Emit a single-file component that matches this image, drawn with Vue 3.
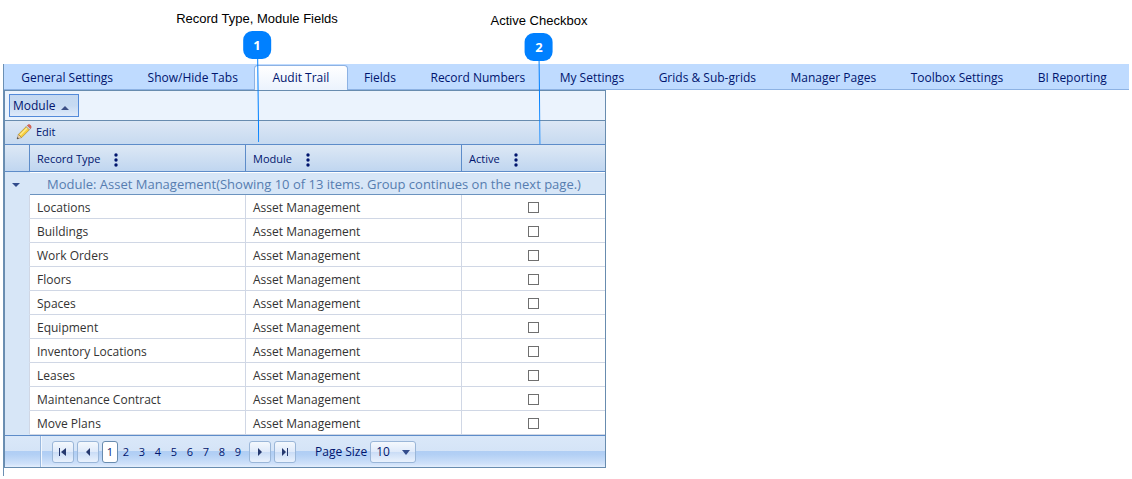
<script setup>
import { ref } from 'vue'

const tabs = [
  'General Settings', 'Show/Hide Tabs', 'Audit Trail', 'Fields', 'Record Numbers',
  'My Settings', 'Grids & Sub-grids', 'Manager Pages', 'Toolbox Settings', 'BI Reporting',
]
const activeTab = ref('Audit Trail')

const columns = ['Record Type', 'Module', 'Active']
const rows = ref([
  'Locations', 'Buildings', 'Work Orders', 'Floors', 'Spaces', 'Equipment',
  'Inventory Locations', 'Leases', 'Maintenance Contract', 'Move Plans',
].map((type) => ({ type, module: 'Asset Management', active: false })))

const page = ref(1)
const pageSize = ref('10')
</script>

<template>
  <div class="page">
    <main class="panel">
      <nav class="tabs" aria-label="Settings">
        <a
          v-for="tab in tabs"
          :key="tab"
          href="#"
          class="tab"
          :class="{ selected: tab === activeTab }"
          @click.prevent="activeTab = tab"
        >{{ tab }}</a>
      </nav>

      <section class="grid">
        <div class="group-panel">
          <button type="button" class="group-chip">
            Module
            <svg width="8" height="5" viewBox="0 0 8 5"><path d="M0 5 4 1l4 4z" fill="#3c4f86" /></svg>
          </button>
        </div>

        <div class="toolbar">
          <button type="button" class="edit">
            <svg width="16" height="16" viewBox="0 0 16 16">
              <path d="M1 15 2.4 10.4 5.6 13.6z" fill="#efd3ac" stroke="#96876f" stroke-width=".6" />
              <path d="M2.4 10.4 10.2 2.6l3.2 3.2-7.8 7.8z" fill="#f6cf3f" stroke="#b08a2c" stroke-width=".7" />
              <path d="M3.6 10.6 10.6 3.6l1 1-7 7z" fill="#fdea91" />
              <path d="m10.2 2.6 1.2-1.2 3.2 3.2-1.2 1.2z" fill="#cfd2d6" stroke="#8f9298" stroke-width=".5" />
              <path d="M11.4 1.4c.8-1 2-1.2 2.9-.3s1.2 2.500.3 3.500z" fill="#e2685c" stroke="#b8503f" stroke-width=".5" />
              <path d="M1 15l.6-1.900 1.300 1.300z" fill="#3c3c3c" />
            </svg>
            Edit
          </button>
        </div>

        <table>
          <colgroup>
            <col class="c-expand"><col class="c-wide"><col class="c-wide"><col>
          </colgroup>
          <thead>
            <tr>
              <th></th>
              <th v-for="c in columns" :key="c" scope="col">
                <span class="head">
                  {{ c }}
                  <button type="button" class="dots" :aria-label="c + ' column menu'">
                    <svg width="4" height="14" viewBox="0 0 4 14" fill="#00156e">
                      <circle cx="2" cy="2" r="1.700" /><circle cx="2" cy="7" r="1.700" /><circle cx="2" cy="12" r="1.700" />
                    </svg>
                  </button>
                </span>
              </th>
            </tr>
          </thead>
          <tbody>
            <tr class="group-row">
              <td class="side">
                <button type="button" class="toggle" aria-label="Collapse group">
                  <svg width="8" height="4" viewBox="0 0 8 4"><path d="M0 0h8L4 4z" fill="#324c8c" /></svg>
                </button>
              </td>
              <td colspan="3" class="group-title">Module: Asset Management(Showing 10 of 13 items. Group continues on the next page.)</td>
            </tr>
            <tr v-for="row in rows" :key="row.type" class="item">
              <td class="side"></td>
              <td>{{ row.type }}</td>
              <td>{{ row.module }}</td>
              <td class="check"><input v-model="row.active" type="checkbox" :aria-label="row.type + ' active'"></td>
            </tr>
          </tbody>
        </table>

        <footer class="pager">
          <div class="pager-side"></div>
          <div class="pager-body">
            <button type="button" class="nav" aria-label="First page">
              <svg width="8" height="8" viewBox="0 0 8 8"><path d="M0 0h1v8H0zM7 0v8L2 4z" fill="#26396f" /></svg>
            </button>
            <button type="button" class="nav" aria-label="Previous page">
              <svg width="8" height="8" viewBox="0 0 8 8"><path d="M6 0v8L2 4z" fill="#26396f" /></svg>
            </button>
            <div class="numbers">
              <button
                v-for="n in 9"
                :key="n"
                type="button"
                class="number"
                :class="{ current: n === page }"
                @click="page = n"
              >{{ n }}</button>
            </div>
            <button type="button" class="nav" aria-label="Next page">
              <svg width="8" height="8" viewBox="0 0 8 8"><path d="M2 0v8l4-4z" fill="#26396f" /></svg>
            </button>
            <button type="button" class="nav" aria-label="Last page">
              <svg width="8" height="8" viewBox="0 0 8 8"><path d="M6 0h1v8H6zM1 0v8l4-4z" fill="#26396f" /></svg>
            </button>
            <label for="page-size">Page Size</label>
            <span class="size">
              <select id="page-size" v-model="pageSize">
                <option>10</option>
                <option>20</option>
                <option>50</option>
              </select>
              <svg width="8" height="5" viewBox="0 0 8 5"><path d="M0 0h8L4 5z" fill="#324c8c" /></svg>
            </span>
          </div>
        </footer>
      </section>
    </main>

    <div class="callout first">
      <span class="note">Record Type, Module Fields</span>
      <span class="badge">1</span>
      <svg width="4" height="83" viewBox="0 0 4 83"><path d="M2.500 0 3.500 83" stroke="#0080ff" /></svg>
    </div>
    <div class="callout second">
      <span class="note">Active Checkbox</span>
      <span class="badge">2</span>
      <svg width="4" height="83" viewBox="0 0 4 83"><path d="M2.500 0 3.500 83" stroke="#0080ff" /></svg>
    </div>
  </div>
</template>

<style>
body {
  margin: 0;
  background: #fff;
}
</style>

<style scoped>
.page {
  position: relative;
  padding: 64px 3px 3px;
  font: 12px/16px "Open Sans", "Noto Sans", sans-serif;
  color: #333;
}

button,
select {
  margin: 0;
  padding: 0;
  border: 0;
  background: none;
  font: inherit;
  color: #00156e;
}

svg {
  display: block;
  flex: none;
}

.panel {
  border-left: 1px solid #6b8fb3;
  padding-bottom: 8px;
}

.tabs {
  display: flex;
  height: 25px;
  padding-right: 5px;
  background: #bfdbff;
  border-bottom: 1px solid #8db2e3;
}

.tab {
  flex: 1 1 auto;
  box-sizing: border-box;
  height: 25px;
  padding-top: 6px;
  text-align: center;
  text-decoration: none;
  white-space: nowrap;
  color: #00156e;
}

.tab.selected {
  margin: 1px -1px 0;
  padding-top: 4px;
  border: 1px solid #8db2e3;
  border-bottom: 0;
  border-radius: 4px 4px 0 0;
  background: linear-gradient(#fff, #ebf3fd);
}

.grid {
  box-sizing: border-box;
  width: 100%;
  max-width: 602px;
  border: 1px solid #688caf;
}

.group-panel {
  padding: 3px 4px;
  background: #ebf3fd;
  border-bottom: 1px solid #688caf;
}

.group-chip {
  display: flex;
  align-items: center;
  gap: 6px;
  box-sizing: border-box;
  width: 70px;
  height: 23px;
  padding: 0 3px;
  border: 1px solid #538ad9;
  background: linear-gradient(#c4d8f0, #c6daf2 50%, #dfeafa);
}

.group-chip svg {
  margin-top: 4px;
}

.toolbar {
  height: 23px;
  padding-left: 11px;
  background: linear-gradient(#dce7f5, #c7daf0);
  border-bottom: 1px solid #5d8cc9;
}

.edit {
  display: flex;
  align-items: center;
  gap: 4px;
  height: 22px;
  font-size: 11px;
}

table {
  width: 100%;
  table-layout: fixed;
  border-collapse: separate;
  border-spacing: 0;
}

.c-expand {
  width: 25px;
}

.c-wide {
  width: 216px;
}

th {
  box-sizing: border-box;
  height: 27px;
  padding: 2px 0 0 7px;
  background: linear-gradient(#dde8f5, #c0d6f0);
  border-right: 1px solid #5d8cc9;
  border-bottom: 1px solid #5d8cc9;
  font-size: 11px;
  font-weight: normal;
  text-align: left;
  color: #00156e;
}

th:last-child,
td:last-child {
  border-right: 0;
}

.head {
  display: flex;
  align-items: center;
  gap: 14px;
}

.dots {
  padding-top: 2px;
}

td {
  box-sizing: border-box;
  padding: 0 0 0 7px;
}

.side {
  padding: 0;
  background: #d7e6f7;
}

.group-row td {
  height: 23px;
  background: #d7e6f7;
}

.group-row .side {
  padding: 2px 0 0;
}

.toggle {
  display: block;
  padding: 4px 7px;
}

.group-row .group-title {
  padding-left: 17px;
  border-top: 1px solid #fff;
  border-bottom: 1px solid #6b93bf;
  font-size: 13px;
  color: #567db0;
}

.item td {
  height: 24px;
  padding-top: 2px;
  border-right: 1px solid #d0d7e5;
  border-bottom: 1px solid #d0d7e5;
}

.item .side {
  border-bottom-color: #d7e6f7;
}

.item td:last-child {
  border-right: 0;
}

.item .check {
  padding: 2px 0 0;
}

.check input {
  display: block;
  appearance: none;
  box-sizing: border-box;
  width: 11px;
  height: 11px;
  margin: 0 auto;
  border: 1px solid #6f6f6f;
  background: #fff;
}

.check input:checked {
  box-shadow: inset 0 0 0 2px #fff;
  background: #00156e;
}

.pager {
  display: flex;
  height: 31px;
  border-top: 1px solid #5d8cc9;
  background: linear-gradient(#dae8f9, #d5e4f7 48%, #b0cef4 50%, #b3d0f5 60%, #cfe1f9 90%, #e4effd);
}

.pager-side {
  box-sizing: border-box;
  width: 36px;
  border-right: 1px solid #9ab9df;
  box-shadow: 1px 0 #f2f7fe;
}

.pager-body {
  display: flex;
  align-items: center;
  gap: 3px;
  padding: 1px 0 0 11px;
}

.nav,
.size {
  box-sizing: border-box;
  height: 22px;
  border: 1px solid #9ab6d8;
  border-radius: 3px;
  background: linear-gradient(#f4f8fd, #dfeafa 48%, #c9dcf6 50%, #eaf2fd);
}

.nav {
  display: flex;
  align-items: center;
  justify-content: center;
  width: 22px;
}

.numbers {
  display: flex;
}

.number {
  box-sizing: border-box;
  width: 16px;
  height: 22px;
  font-size: 11px;
  text-align: center;
}

.number.current {
  border: 1px solid #688caf;
  border-radius: 3px;
  background: #fff;
}

.pager label {
  margin-left: 16px;
  color: #00156e;
}

.size {
  position: relative;
  width: 46px;
}

.size select {
  display: block;
  appearance: none;
  width: 100%;
  height: 20px;
  padding-left: 5px;
}

.size svg {
  position: absolute;
  top: 8px;
  right: 5px;
  pointer-events: none;
}

.callout {
  position: absolute;
  display: flex;
  flex-direction: column;
  align-items: center;
  transform: translateX(-50%);
  font: 13px/16px "Liberation Sans", Arial, sans-serif;
  color: #000;
  white-space: nowrap;
  pointer-events: none;
}

.first {
  top: 11px;
  left: 257px;
}

.second {
  top: 13px;
  left: 539px;
}

.badge {
  width: 28px;
  height: 28px;
  margin-top: 4px;
  border-radius: 9px;
  background: #0080ff;
  font: bold 13px/28px "Open Sans", sans-serif;
  text-align: center;
  color: #fff;
}
</style>
